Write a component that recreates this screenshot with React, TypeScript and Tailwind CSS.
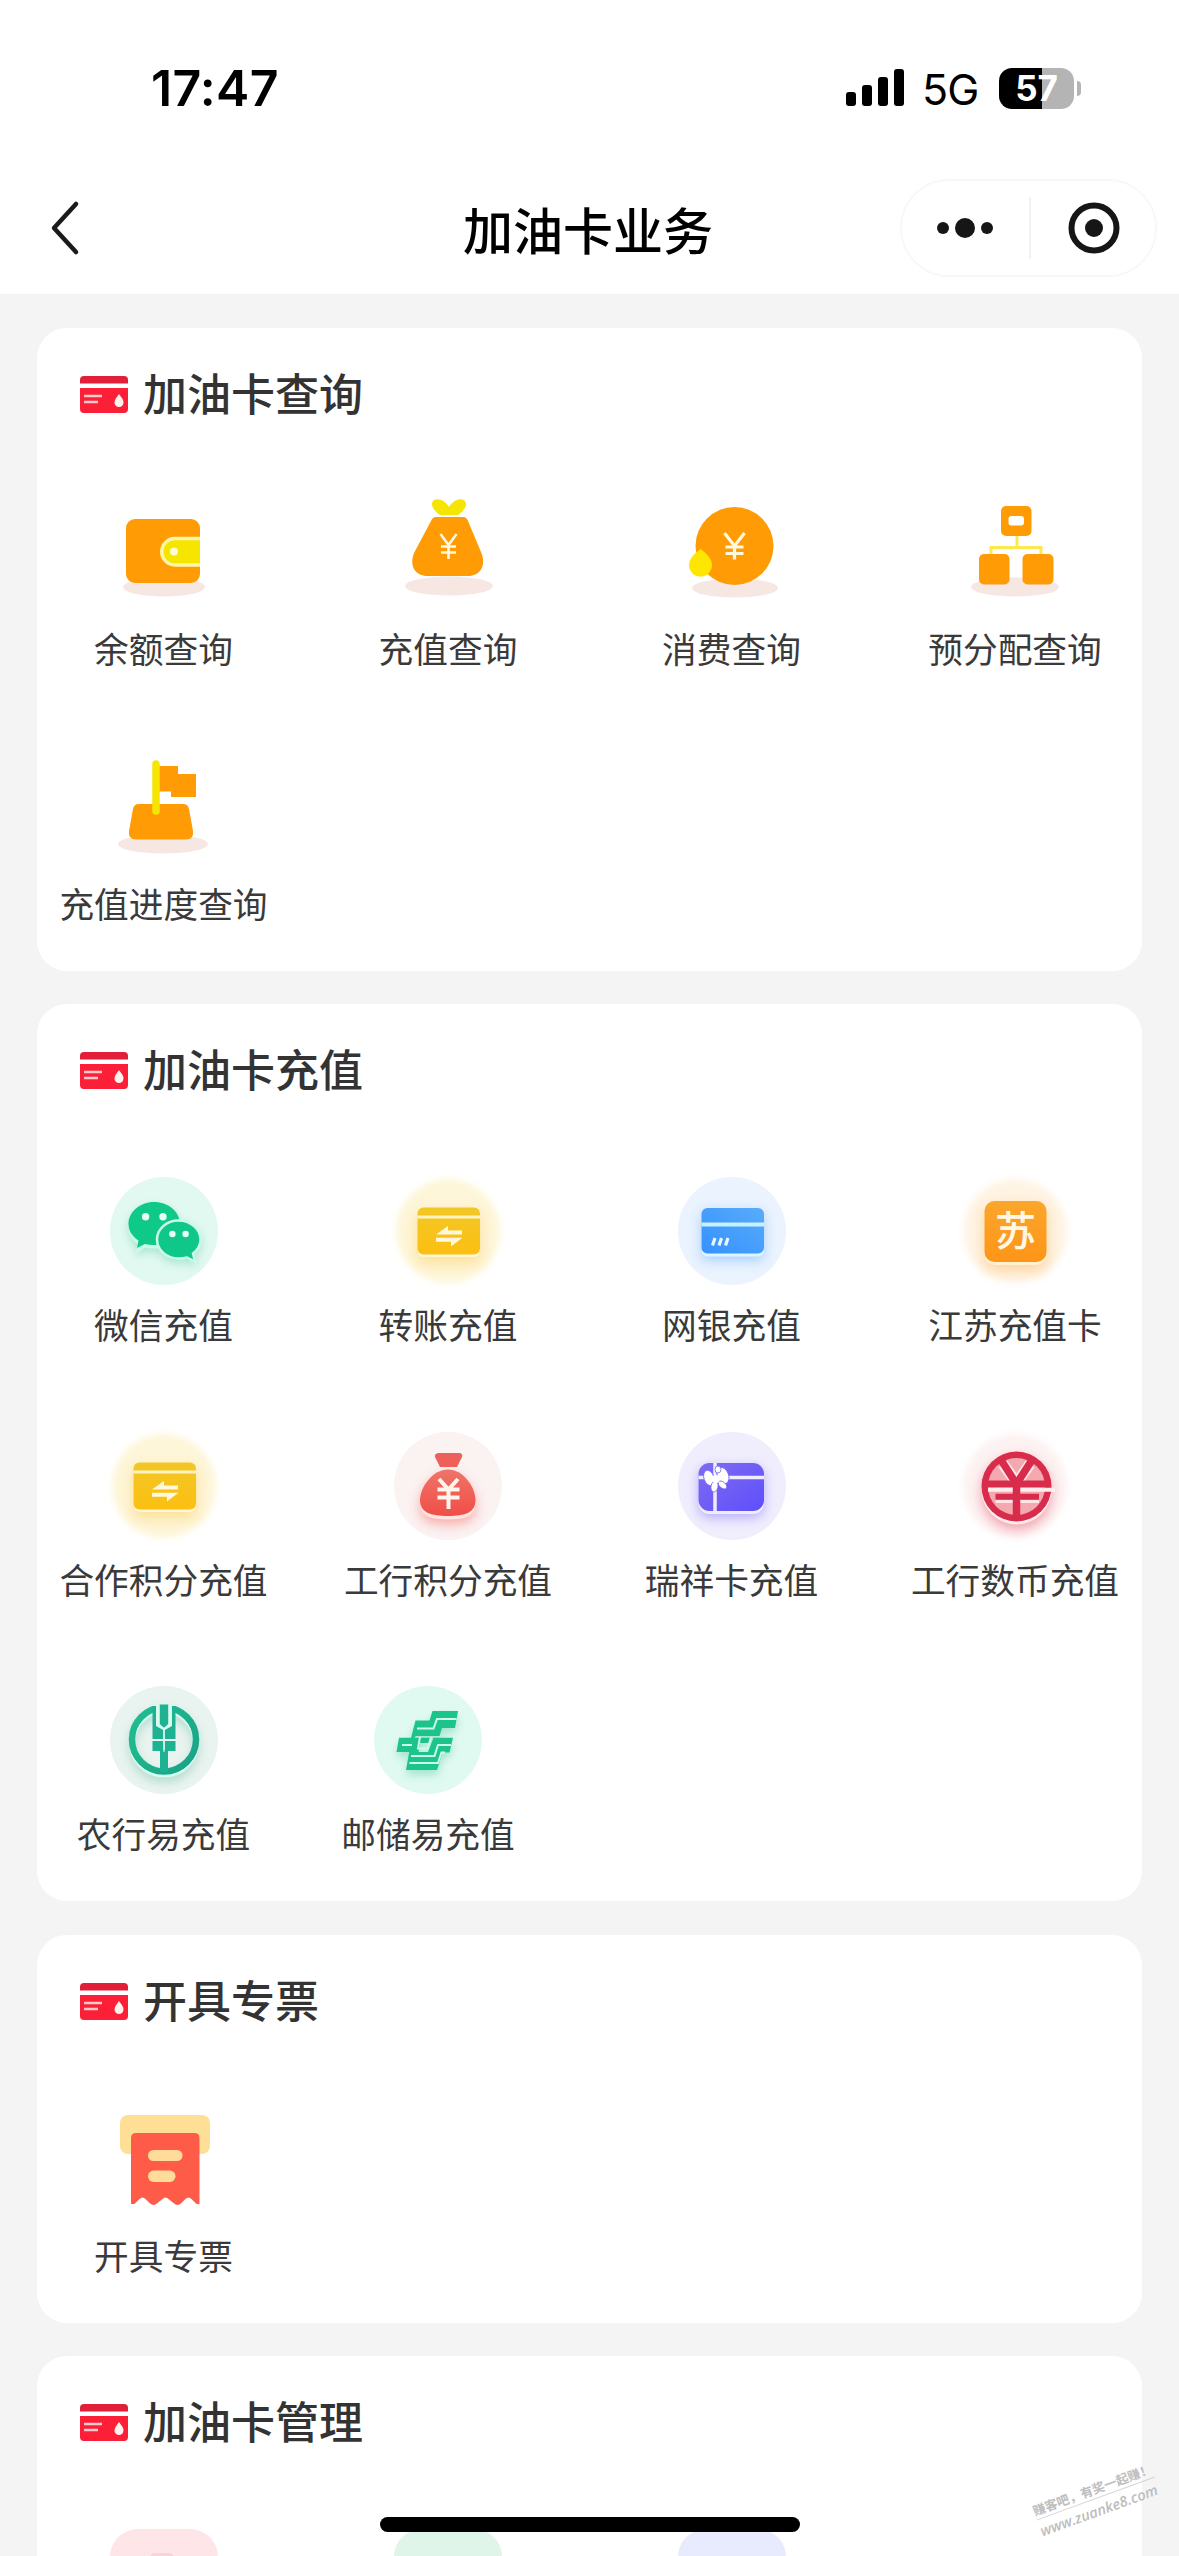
import type { ReactNode } from 'react'

const ORANGE = '#ff9c05'
const YELLOW = '#f6e500'

function Halo({ color, soft }: { color: string; soft?: boolean }) {
  return <circle cx="54" cy="54" r={soft ? 52 : 54} fill={color} className={soft ? 'blur-[3px]' : ''} />
}

function Ground({ cx = 54, cy = 86, rx = 44 }: { cx?: number; cy?: number; rx?: number }) {
  return <ellipse cx={cx} cy={cy} rx={rx} ry="9.5" fill="#f6e7e3" />
}

function Wallet() {
  return (
    <>
      <Ground cy={86} rx={41} />
      <rect x="16" y="18" width="74" height="64" rx="9" fill={ORANGE} />
      <path d="M90 37.500H65a13 13 0 0 0 0 26.500H90" fill={YELLOW} stroke="#fff6a8" strokeWidth="3.500" />
      <circle cx="64" cy="50.500" r="4" fill="#fffbd0" />
    </>
  )
}

function Purse() {
  return (
    <>
      <Ground cx={55} cy={85} />
      <path d="M46 14C40 10 36 4 39 0c4-4 12-1 16 6C59-1 67-4 71 0c3 4-1 10-7 14Z" fill={YELLOW} />
      <path d="M42 16H69c3 0 4 2 5 4L87 51c6 14-1 24-13 24H34C21 75 15 65 20 52L37 20c1-2 2-4 5-4Z" fill={ORANGE} />
      <path d="M46.500 33 54.500 44 62.500 33M54.500 44V58M47 45.500H62M47 51.500H62" fill="none" stroke="#fff8e0" strokeWidth="2.600" />
    </>
  )
}

function Coin() {
  return (
    <>
      <Ground cx={57} cy={87} rx={43} />
      <circle cx="56.500" cy="45" r="39" fill={ORANGE} />
      <path d="M22.500 48c2.500 2 11.500 8 11.500 16a11.500 11.500 0 0 1-23 0c0-8 9-14 11.500-16Z" fill="#ffe600" />
      <path d="M46.500 32 56.500 45 66.500 32M56.500 45V58.500M47.500 46H65.500M47.500 52.500H65.500" fill="none" stroke="#fff8e0" strokeWidth="3.200" />
    </>
  )
}

function OrgChart() {
  return (
    <>
      <Ground cy={86} />
      <path d="M56 35V46M30 54V46.500H80V54" fill="none" stroke="#fbe94e" strokeWidth="3" />
      <rect x="40" y="5" width="30.500" height="30" rx="5" fill={ORANGE} />
      <rect x="47.500" y="15" width="15.500" height="9.500" rx="3" fill="#fff" />
      <rect x="18" y="53" width="30.500" height="30.500" rx="5" fill={ORANGE} />
      <rect x="61.500" y="53" width="31" height="30.500" rx="5" fill={ORANGE} />
    </>
  )
}

function Flag() {
  return (
    <>
      <Ground cx={53} cy={88} rx={45} />
      <path d="M29 48H73q5 0 6 5l4 22q1 8.500-7 8.500H26q-8 0-7-8.500l4-22q1-5 6-5Z" fill={ORANGE} />
      <path d="M48 10H68v8H86V41H61V35.500H48Z" fill={ORANGE} />
      <path d="M46 8V55" stroke={YELLOW} strokeWidth="7.500" strokeLinecap="round" />
    </>
  )
}

function Wechat() {
  return (
    <>
      <Halo color="#e2f9f1" />
      <g className="drop-shadow-[0_4px_4px_rgba(10,170,120,0.25)]">
        <path d="M44 25c14.500 0 26 10 26 22.500S58.500 69 44 69q-5 0-9-1l-9 6 2-9.500c-6-4-9.500-10-9.500-17C18.500 35 30 25 44 25Z" fill="#c9fbe9" transform="translate(0 2.500)" />
        <path d="M44 25c14.500 0 26 10 26 22S58.500 68 44 68q-5 0-9-1l-8 4 1.500-7.500c-6-4-10-9.500-10-16.500C18.500 35 30 25 44 25Z" fill="#0fc988" />
        <path d="M68.500 43.500c12 0 22 8.500 22 19 0 6-3 10.500-7.500 14l2 8-8-4q-4 1-8.500 1c-12 0-21.500-8.500-21.500-19s9.500-19 21.500-19Z" fill="#0fc789" stroke="#c9fbe9" strokeWidth="2.500" />
      </g>
      <g fill="#e6fff6">
        <circle cx="35.600" cy="39.700" r="3.700" />
        <circle cx="53" cy="39.700" r="3.700" />
        <circle cx="62.400" cy="57" r="3.200" />
        <circle cx="75.600" cy="57" r="3.200" />
      </g>
    </>
  )
}

function Transfer() {
  return (
    <>
      <Halo color="#fef6d9" soft />
      <defs>
        <linearGradient id="gold" x1="0" y1="0" x2="0" y2="1">
          <stop offset="0" stopColor="#f2c726" />
          <stop offset="1" stopColor="#fcbf12" />
        </linearGradient>
      </defs>
      <g className="drop-shadow-[0_6px_7px_rgba(250,180,20,0.35)]">
        <rect x="23.500" y="33" width="62.500" height="47" rx="6" fill="#fff7d6" />
        <rect x="23.500" y="30.500" width="62.500" height="47" rx="6" fill="url(#gold)" />
      </g>
      <path d="M23.500 40H86" stroke="#fff3c0" strokeWidth="3" />
      <path d="M42 57.500H68V53.500H54V49ZM68.500 60.800H42V64.800H57V69.500Z" fill="#fff8dc" />
    </>
  )
}

function BankCard() {
  return (
    <>
      <Halo color="#eaf3fe" />
      <defs>
        <linearGradient id="blue" x1="0" y1="1" x2="1" y2="0">
          <stop offset="0" stopColor="#3591ff" />
          <stop offset="1" stopColor="#58acf9" />
        </linearGradient>
      </defs>
      <g className="drop-shadow-[0_4px_6px_rgba(50,140,250,0.35)]">
        <rect x="23.500" y="34" width="62.500" height="45.500" rx="6" fill="#dcf5ff" />
        <rect x="23.500" y="31" width="62.500" height="45.500" rx="6" fill="url(#blue)" />
      </g>
      <path d="M23.500 47.500H86" stroke="#c8f1ff" strokeWidth="4" />
      <path d="M37 61 34.500 68.500M43.500 61 41 68.500M50 61 47.500 68.500" stroke="#e8f8ff" strokeWidth="3.200" />
    </>
  )
}

function SuCard() {
  return (
    <>
      <Halo color="#fff4e4" soft />
      <defs>
        <linearGradient id="amber" x1="0" y1="0" x2="0" y2="1">
          <stop offset="0" stopColor="#fba62c" />
          <stop offset="1" stopColor="#fd9518" />
        </linearGradient>
      </defs>
      <g className="drop-shadow-[0_5px_7px_rgba(250,150,30,0.35)]">
        <rect x="23.500" y="27" width="62" height="61" rx="10" fill="#fff0cf" />
        <rect x="23.500" y="24" width="62" height="61" rx="10" fill="url(#amber)" />
      </g>
      <text x="54.500" y="69" textAnchor="middle" fontSize="41" fontWeight="500" fill="#fff8e6">苏</text>
    </>
  )
}

function RedBag() {
  return (
    <>
      <Halo color="#fbf2f2" />
      <defs>
        <linearGradient id="coral" x1="0" y1="0" x2="0" y2="1">
          <stop offset="0" stopColor="#ef7468" />
          <stop offset="1" stopColor="#f04e48" />
        </linearGradient>
      </defs>
      <path d="M44 21H66q3 1 2 4l-5 10H46L41 25q-1-3 3-4Z" fill="#ee605a" />
      <g className="drop-shadow-[0_5px_6px_rgba(240,70,60,0.4)]">
        <path d="M54 41c15 0 27 17 27.500 30S71 87.500 54 87.500 25.500 84 26 71 39 41 54 41Z" fill="#ffe3e0" />
        <path d="M54 37.500c15 0 27 17 27.500 30S71 84 54 84 25.500 80.500 26 67.500 39 37.500 54 37.500Z" fill="url(#coral)" />
      </g>
      <path d="M45 47 54.500 57.500 64 47M54.500 57V77M43.500 57.500H65.500M43.500 65.500H65.500" fill="none" stroke="#fff4ee" strokeWidth="4" />
    </>
  )
}

function GiftCard() {
  return (
    <>
      <Halo color="#f0eefd" />
      <defs>
        <linearGradient id="violet" x1="0" y1="0" x2="1" y2="1">
          <stop offset="0" stopColor="#7f6cf0" />
          <stop offset="1" stopColor="#5f4ffb" />
        </linearGradient>
      </defs>
      <g className="drop-shadow-[0_4px_6px_rgba(100,80,250,0.4)]">
        <rect x="20.500" y="34" width="65.500" height="48" rx="11" fill="#f0edff" />
        <rect x="20.500" y="31" width="65.500" height="48" rx="11" fill="url(#violet)" />
      </g>
      <path d="M20.500 45.500H86M37 31V79" stroke="#efecff" strokeWidth="3.500" />
      <g fill="#fff" stroke="#7565f2" strokeWidth="0.800">
        <ellipse cx="31" cy="46" rx="5" ry="8" transform="rotate(-20 31 46)" />
        <ellipse cx="45" cy="43.500" rx="5.500" ry="8.500" transform="rotate(-22 45 43.500)" />
        <ellipse cx="40" cy="37.500" rx="3" ry="3.500" />
        <ellipse cx="36.500" cy="54.500" rx="3.500" ry="5.500" transform="rotate(12 36.500 54.500)" />
        <ellipse cx="44.500" cy="53" rx="3" ry="5" transform="rotate(-50 44.500 53)" />
      </g>
      <circle cx="38" cy="47" r="4" fill="#fff" />
    </>
  )
}

function DigitalYuan() {
  return (
    <>
      <Halo color="#fdf2f2" soft />
      <g className="drop-shadow-[0_5px_6px_rgba(225,40,70,0.4)]">
        <circle cx="55.500" cy="57.500" r="35" fill="#ffeaec" />
        <circle cx="55.500" cy="54.500" r="35" fill="#d72c4c" />
      </g>
      <circle cx="55.500" cy="54.500" r="28.500" fill="#f3a9af" />
      <path d="M42 32 55.500 51 69 32" fill="none" stroke="#ffe7e8" strokeWidth="11" />
      <path d="M22 52H89" stroke="#d72c4c" strokeWidth="7" />
      <path d="M27 57.800H94" stroke="#ffecec" strokeWidth="4" />
      <path d="M34.500 69.500H78" stroke="#ffe3e5" strokeWidth="3" />
      <path d="M34.500 64.800H78" stroke="#d72c4c" strokeWidth="6" />
      <path d="M40 28 55.500 52 71 28M55.500 50V87" fill="none" stroke="#d72c4c" strokeWidth="7.500" />
    </>
  )
}

function AgriBank() {
  return (
    <>
      <Halo color="#e9f3ef" />
      <defs>
        <linearGradient id="teal" gradientUnits="userSpaceOnUse" x1="20" y1="30" x2="85" y2="80">
          <stop offset="0" stopColor="#22bd90" />
          <stop offset="1" stopColor="#18a487" />
        </linearGradient>
      </defs>
      <g className="drop-shadow-[0_5px_4px_rgba(20,150,115,0.25)]">
        <circle cx="54" cy="56" r="32" fill="none" stroke="#d7fff2" strokeWidth="6.500" />
        <circle cx="54" cy="53.500" r="32" fill="none" stroke="url(#teal)" strokeWidth="6.500" />
      </g>
      <path d="M43 17H65V44H43Z" fill="#dff5ed" />
      <g fill="#1eb192">
        <path d="M49.800 18.500H58.200V38L54 42 49.800 38ZM42.500 20H46V40L53.200 44V53H42.500ZM65.500 20H62V40L54.800 44V53H65.500ZM42.500 55H53.200V65H42.500ZM54.800 55H65.500V65H54.800ZM50 64H58V86H50Z" />
      </g>
      <path d="M48 20V39L54 43 60 39V20" fill="none" stroke="#d4fff1" strokeWidth="1.800" />
      <path d="M54 42V66" stroke="#d4fff1" strokeWidth="1" />
    </>
  )
}

function PostBank() {
  return (
    <>
      <Halo color="#e1faf1" />
      {/* solid body first, the light seams go over it */}
      <g className="drop-shadow-[0_5px_4px_rgba(20,180,125,0.3)]" fill="#1cc38a">
        <path d="M58.500 25H84L81 42H68L65.500 50H42L40.500 51.700H56L55 57H46L44.500 66H38L37.500 66H22.500L25 51.700H37L41.500 34.500H55.500Z" />
        <path d="M59.500 51.700H79L75.500 66.500H68.500L63 84H32L36.500 59H44L43.500 66H54Z" />
      </g>
      <g fill="none" stroke="#cdfbe9" strokeWidth="2">
        <path d="M82.500 33H63L59.500 42.500H43" />
        <path d="M57 51.500 53.500 62.500H44L46 51" />
        <path d="M77 59H64L60.500 70H37" />
        <path d="M71 66.500H67.500L64 77H35.500" />
        <path d="M28 59H38" />
      </g>
    </>
  )
}

function Receipt() {
  return (
    <>
      <rect x="10" y="7" width="90" height="39" rx="8" fill="#ffdf96" />
      <path d="M26 25H84.500q5 0 5 5V96q-2 1-4-1l-4-4q-3-3-6 0l-4 4q-4 4-8 0l-5-4q-3-3-6 0l-5 4q-4 4-8 0l-4-4q-3-3-6 0l-4 4q-1 1-1 1H21V30q0-5 5-5Z" fill="#ff5b49" />
      <rect x="38" y="42" width="34.500" height="11" rx="5.500" fill="#ffdc9a" />
      <rect x="38" y="62.500" width="27.500" height="11.500" rx="5.700" fill="#ffdc9a" />
    </>
  )
}

function Tile({ color, mark }: { color: string; mark?: string }) {
  return (
    <>
      <rect width="108" height="108" rx="28" fill={color} />
      {mark && <rect x="40" y="24" width="24" height="20" rx="5" fill={mark} />}
    </>
  )
}

type Item = { label: string; icon: ReactNode; nudge?: boolean }

const sections: { title: string; items: Item[] }[] = [
  {
    title: '加油卡查询',
    items: [
      { label: '余额查询', icon: <Wallet /> },
      { label: '充值查询', icon: <Purse /> },
      { label: '消费查询', icon: <Coin /> },
      { label: '预分配查询', icon: <OrgChart /> },
      { label: '充值进度查询', icon: <Flag /> },
    ],
  },
  {
    title: '加油卡充值',
    items: [
      { label: '微信充值', icon: <Wechat /> },
      { label: '转账充值', icon: <Transfer /> },
      { label: '网银充值', icon: <BankCard /> },
      { label: '江苏充值卡', icon: <SuCard /> },
      { label: '合作积分充值', icon: <Transfer /> },
      { label: '工行积分充值', icon: <RedBag /> },
      { label: '瑞祥卡充值', icon: <GiftCard /> },
      { label: '工行数币充值', icon: <DigitalYuan /> },
      { label: '农行易充值', icon: <AgriBank /> },
      { label: '邮储易充值', icon: <PostBank />, nudge: true },
    ],
  },
  {
    title: '开具专票',
    items: [{ label: '开具专票', icon: <Receipt /> }],
  },
  {
    title: '加油卡管理',
    items: [
      { label: '', icon: <Tile color="#fee6e8" mark="#fad3d8" /> },
      { label: '', icon: <Tile color="#dff5e9" /> },
      { label: '', icon: <Tile color="#e8eafd" /> },
    ],
  },
]

function StatusBar() {
  return (
    <div className="flex h-[176px] items-center justify-between pl-[151px] pr-[98px]">
      <span className="font-[Inter] text-[50px] font-semibold leading-none tracking-[0.3px]">17:47</span>
      <div className="flex items-center">
        <svg width="60" height="38" viewBox="0 0 60 38">
          <rect x="0" y="23" width="10" height="14" rx="3" />
          <rect x="16" y="16" width="10" height="21" rx="3" />
          <rect x="32" y="8" width="10" height="29" rx="3" />
          <rect x="48" y="0" width="10" height="37" rx="3" />
        </svg>
        <span className="ml-[16px] w-[58px] whitespace-nowrap pt-[3px] font-[Inter] text-[43px] leading-none tracking-[-0.8px]">5G</span>
        <div className="ml-[19px] flex h-[41px] w-[75px] items-center justify-center rounded-[13px] bg-[linear-gradient(90deg,#000_57%,#b4b4b4_57%)] font-[Inter] text-[35px] font-bold leading-none text-white">
          57
        </div>
        <div className="ml-[3px] h-[15px] w-[4px] rounded-r-full bg-[#b4b4b4]" />
      </div>
    </div>
  )
}

function NavBar() {
  return (
    <div className="flex h-[104px] items-center justify-between pl-[49px] pr-[22px]">
      <svg width="254" height="56" viewBox="0 0 254 56" fill="none" stroke="#1a1a1a" strokeWidth="4.500" strokeLinecap="round" strokeLinejoin="round">
        <path d="M27 4 5 28 27 52" />
      </svg>
      <h1 className="ml-[-27px] pb-[1px] text-[50px] font-medium leading-none">加油卡业务</h1>
      <div className="flex h-[98px] w-[257px] items-center rounded-full border-2 border-[#f8f8f8]">
        <svg width="127" height="60" viewBox="0 0 127 60" fill="#161616">
          <circle cx="41" cy="30" r="6" />
          <circle cx="63" cy="30" r="10" />
          <circle cx="85" cy="30" r="6" />
        </svg>
        <div className="h-[62px] w-[2px] bg-[#f3f3f3]" />
        <svg width="124" height="60" viewBox="0 0 124 60" fill="#161616">
          <circle cx="63" cy="30" r="22.500" fill="none" stroke="#161616" strokeWidth="6" />
          <circle cx="63" cy="30" r="9" />
        </svg>
      </div>
    </div>
  )
}

function CardIcon() {
  return (
    <svg width="48" height="38" viewBox="0 0 48 38">
      <path d="M4 0H44q4 0 4 4V7.500H0V4Q0 0 4 0Z" fill="#e21f38" />
      <path d="M0 12H48V33q0 4-4 4H4q-4 0-4-4Z" fill="#fb1f38" />
      <path d="M4 20H22M4 26H18" stroke="#ffc9cc" strokeWidth="2.600" />
      <path d="M39 18c3 4 4.500 6 4.500 8.500a4.500 4.500 0 0 1-9 0C34.500 24 36 22 39 18Z" fill="#fff1ec" />
    </svg>
  )
}

export default function App() {
  return (
    <div
      lang="zh-CN"
      className="relative h-[2556px] w-[1179px] overflow-hidden bg-[#f4f4f4] font-['Noto_Sans_CJK_SC',sans-serif] text-black"
    >
      <header className="h-[294px] bg-white">
        <StatusBar />
        <NavBar />
      </header>

      <main className="flex flex-col gap-[33.5px] px-[37px] pt-[34px]">
        {sections.map((section) => (
          <section key={section.title} className="w-[1105px] rounded-[30px] bg-white pb-[41px]">
            <div className="flex h-[173px] items-start gap-[15px] pl-[43px] pt-[48px]">
              <CardIcon />
              <h2 className="mt-[-6px] text-[44px] font-medium leading-[44px] text-[#333]">{section.title}</h2>
            </div>
            <div className="ml-[-16px] grid grid-cols-[285px_284px_283px_284px] gap-y-[80.5px]">
              {section.items.map((item, i) => (
                <div key={i} className={item.nudge ? 'flex flex-col items-center pr-[40px]' : 'flex flex-col items-center'}>
                  <svg width="108" height="108" viewBox="0 0 108 108" className="overflow-visible">
                    {item.icon}
                  </svg>
                  <span className="mt-[14px] h-[52px] whitespace-nowrap text-[34.7px] leading-[50px] text-[#3a3a3a]">{item.label}</span>
                </div>
              ))}
            </div>
          </section>
        ))}
      </main>

      <div className="absolute left-[380px] top-[2517px] h-[15px] w-[420px] rounded-full bg-black" />

      <div className="absolute left-[1033px] top-[2479px] flex w-[126px] -rotate-20 flex-col gap-[3px] whitespace-nowrap text-[#bdbdbd]">
        <p className="border-b border-[#d4d4d4] text-[12.6px] font-bold leading-[19px]">赚客吧，有奖一起赚！</p>
        <p className="font-['Open_Sans'] text-[14.5px] font-semibold italic leading-[18px]">www.zuanke8.com</p>
      </div>
    </div>
  )
}
